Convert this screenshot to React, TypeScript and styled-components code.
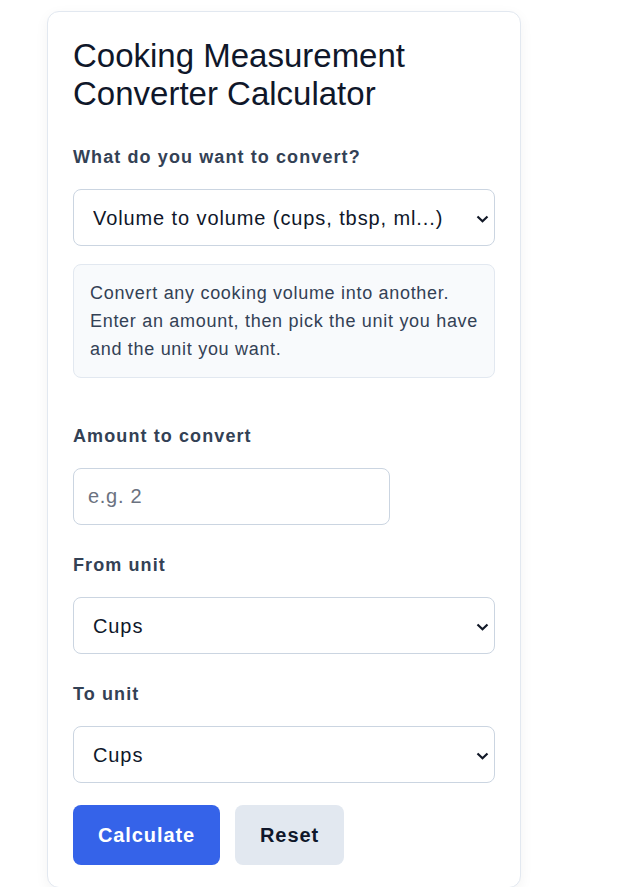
import React, { FC, useState } from 'react';
import styled, { createGlobalStyle } from 'styled-components';

const GlobalStyle = createGlobalStyle`
  * {
    box-sizing: border-box;
  }
  body {
    margin: 0;
    background: #ffffff;
    font-family: 'Liberation Sans', Arial, sans-serif;
    color: #0f172a;
  }
`;

const Page = styled.div`
  padding: 11px 0 0 47px;
`;

const Card = styled.div`
  width: 474px;
  background: #ffffff;
  border: 1px solid #e2e8f0;
  border-radius: 12px;
  box-shadow: 0 4px 14px rgba(15, 23, 42, 0.05);
  padding: 25px 25px 22px;
`;

const Title = styled.h1`
  margin: 0 0 34px;
  font-size: 33px;
  font-weight: 400;
  line-height: 38px;
  color: #0f172a;
`;

const Field = styled.div<{ gap?: number }>`
  display: flex;
  flex-direction: column;
  gap: 22px;
  margin-bottom: ${p => p.gap ?? 30}px;
`;

const Label = styled.label`
  font-size: 18px;
  font-weight: 700;
  line-height: 20px;
  letter-spacing: 1.1px;
  color: #334155;
`;

const SelectWrap = styled.div`
  position: relative;
  width: 100%;
`;

const Select = styled.select`
  appearance: none;
  width: 100%;
  height: 57px;
  padding: 0 40px 0 19px;
  font-family: inherit;
  font-size: 20px;
  letter-spacing: 0.9px;
  color: #0f172a;
  background: #ffffff;
  border: 1px solid #cbd5e1;
  border-radius: 8px;
`;

const Chevron = styled.svg`
  position: absolute;
  right: 6px;
  top: 50%;
  width: 13px;
  height: 8px;
  margin-top: -3px;
  pointer-events: none;
`;

const Input = styled.input`
  width: 317px;
  height: 57px;
  padding: 0 14px;
  font-family: inherit;
  font-size: 20px;
  letter-spacing: 0.7px;
  color: #0f172a;
  border: 1px solid #cbd5e1;
  border-radius: 8px;
  &::placeholder {
    color: #6b7280;
  }
`;

const Hint = styled.div`
  margin: 18px 0 48px;
  padding: 14px 8px 14px 16px;
  background: #f8fafc;
  border: 1px solid #e2e8f0;
  border-radius: 8px;
  font-size: 18px;
  line-height: 28px;
  letter-spacing: 0.7px;
  color: #334155;
`;

const Actions = styled.div`
  display: flex;
  gap: 15px;
  margin-top: 22px;
`;

const Button = styled.button<{ variant?: 'primary' | 'secondary' }>`
  height: 60px;
  padding: 0 25px;
  border: none;
  border-radius: 8px;
  font-family: inherit;
  font-size: 20px;
  font-weight: 700;
  letter-spacing: 0.9px;
  cursor: pointer;
  background: ${p => (p.variant === 'secondary' ? '#e2e8f0' : '#3563e9')};
  color: ${p => (p.variant === 'secondary' ? '#0f172a' : '#ffffff')};
`;

const units = ['Cups', 'Tablespoons', 'Teaspoons', 'Milliliters', 'Liters', 'Fluid ounces'];

const Dropdown: FC<React.SelectHTMLAttributes<HTMLSelectElement>> = props => (
  <SelectWrap>
    <Select {...props} />
    <Chevron viewBox="0 0 13 8">
      <path d="M1.5 1.5 L6.5 6.2 L11.5 1.5" fill="none" stroke="#111827" strokeWidth="2.2" />
    </Chevron>
  </SelectWrap>
);

const App: FC = () => {
  const [amount, setAmount] = useState('');
  const [from, setFrom] = useState('Cups');
  const [to, setTo] = useState('Cups');

  const reset = () => {
    setAmount('');
    setFrom('Cups');
    setTo('Cups');
  };

  return (
    <Page>
      <GlobalStyle />
      <Card>
        <Title>Cooking Measurement Converter Calculator</Title>
        <Field gap={0}>
          <Label htmlFor="mode">What do you want to convert?</Label>
          <Dropdown id="mode" defaultValue="volume">
            <option value="volume">Volume to volume (cups, tbsp, ml...)</option>
            <option value="weight">Weight to weight (g, oz, lb...)</option>
          </Dropdown>
        </Field>
        <Hint>
          Convert any cooking volume into another. Enter an amount, then pick the unit you have
          and the unit you want.
        </Hint>
        <Field>
          <Label htmlFor="amount">Amount to convert</Label>
          <Input
            id="amount"
            type="text"
            placeholder="e.g. 2"
            value={amount}
            onChange={e => setAmount(e.target.value)}
          />
        </Field>
        <Field>
          <Label htmlFor="from">From unit</Label>
          <Dropdown id="from" value={from} onChange={e => setFrom(e.target.value)}>
            {units.map(u => (
              <option key={u}>{u}</option>
            ))}
          </Dropdown>
        </Field>
        <Field gap={0}>
          <Label htmlFor="to">To unit</Label>
          <Dropdown id="to" value={to} onChange={e => setTo(e.target.value)}>
            {units.map(u => (
              <option key={u}>{u}</option>
            ))}
          </Dropdown>
        </Field>
        <Actions>
          <Button>Calculate</Button>
          <Button variant="secondary" onClick={reset}>
            Reset
          </Button>
        </Actions>
      </Card>
    </Page>
  );
};

export default App;
